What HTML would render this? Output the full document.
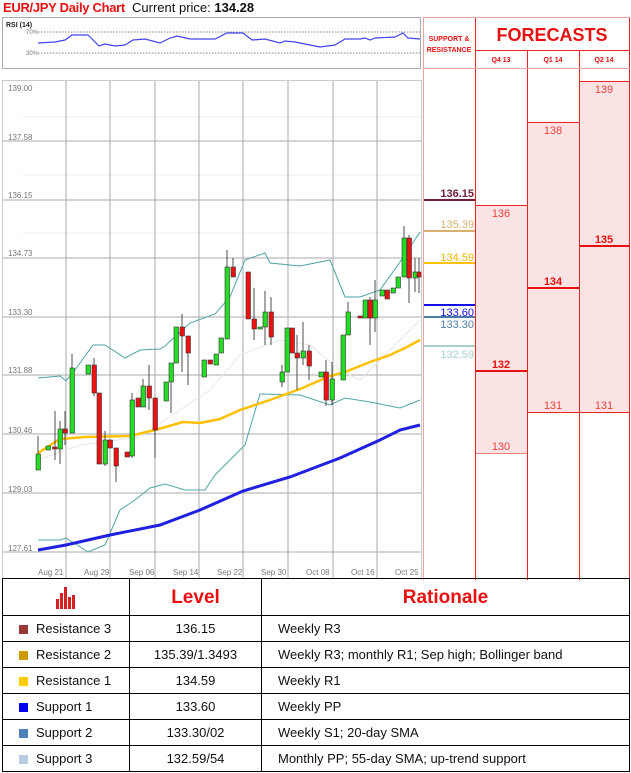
<!DOCTYPE html>
<html><head><meta charset="utf-8"><style>
body{margin:0;width:631px;height:773px;background:#fff;position:relative;overflow:hidden;font-family:"Liberation Sans",sans-serif}
.a{position:absolute}
table{border-collapse:collapse;position:absolute;left:2px;top:578px;width:628px}
td{border:1px solid #000;height:25px;font-size:13px;color:#111;padding:0;line-height:15px}
.c{text-align:center}
.sq{display:inline-block;width:9px;height:9px;margin:0 8px 0 16px;vertical-align:-1px}
</style></head><body>
<div class="a" style="left:3px;top:0;font-size:13px;color:#e81010;font-weight:bold;letter-spacing:-0.3px">EUR/JPY Daily Chart</div>
<div class="a" style="left:132px;top:0;font-size:13px;color:#111">Current price: <b>134.28</b></div>
<svg class="a" style="left:0;top:0" width="631" height="580">
<rect x="2.5" y="17.5" width="418" height="51" fill="#fff" stroke="#aaa"/>
<text x="6" y="27" font-size="7" font-weight="bold" fill="#222" font-family="Liberation Sans">RSI (14)</text>
<text x="26" y="34" font-size="6" fill="#777">70%</text><text x="26" y="55" font-size="6" fill="#777">30%</text>
<line x1="38" y1="32" x2="420" y2="32" stroke="#555" stroke-dasharray="1.5,1.5" stroke-width="0.8"/>
<line x1="38" y1="53" x2="420" y2="53" stroke="#555" stroke-dasharray="1.5,1.5" stroke-width="0.8"/>
<polyline fill="none" stroke="#4444ee" stroke-width="1.2" points="38,43 55,42 65,40 72,35 88,35 99,46 105,44 115,46 125,45 133,40 145,39 160,43 170,38 177,36 190,39 215,39 227,33 243,33 252,40 265,39 280,43 285,41 295,42 305,44 320,47 335,45 345,39 360,39 365,38 370,40 375,38 395,37 403,33 408,38 420,39"/>
<rect x="2.5" y="80.5" width="419" height="498" fill="#fff" stroke="#ccc"/>
<g stroke="#eee" stroke-width="1">
<line x1="22" y1="117" x2="421" y2="117"/><line x1="22" y1="175" x2="421" y2="175"/><line x1="22" y1="233" x2="421" y2="233"/>
</g>
<g stroke="#aaa" stroke-width="1">
<line x1="3" y1="141" x2="421" y2="141"/><line x1="3" y1="200" x2="421" y2="200"/><line x1="3" y1="258" x2="421" y2="258"/><line x1="3" y1="317" x2="421" y2="317"/><line x1="3" y1="375" x2="421" y2="375"/><line x1="3" y1="434" x2="421" y2="434"/><line x1="3" y1="493" x2="421" y2="493"/><line x1="3" y1="552" x2="421" y2="552"/>
<line x1="66" y1="81" x2="66" y2="578"/><line x1="110" y1="81" x2="110" y2="578"/><line x1="155" y1="81" x2="155" y2="578"/><line x1="199" y1="81" x2="199" y2="578"/><line x1="243" y1="81" x2="243" y2="578"/><line x1="288" y1="81" x2="288" y2="578"/><line x1="333" y1="81" x2="333" y2="578"/><line x1="377" y1="81" x2="377" y2="578"/>
</g>
<g font-size="8" fill="#777" font-family="Liberation Sans">
<text x="8" y="91">139.00</text><text x="8" y="140">137.58</text><text x="8" y="198">136.15</text><text x="8" y="256">134.73</text><text x="8" y="315">133.30</text><text x="8" y="373">131.88</text><text x="8" y="433">130.46</text><text x="8" y="492">129.03</text><text x="8" y="551">127.61</text>
<text x="38" y="575">Aug 21</text><text x="84" y="575">Aug 29</text><text x="129" y="575">Sep 06</text><text x="173" y="575">Sep 14</text><text x="217" y="575">Sep 22</text><text x="261" y="575">Sep 30</text><text x="306" y="575">Oct 08</text><text x="351" y="575">Oct 16</text><text x="395" y="575">Oct 25</text>
</g>
<polyline fill="none" stroke="#e6e6e6" stroke-width="1" points="38,460 80,445 140,437 180,410 210,390 240,355 280,340 310,345 340,370 360,380 400,340 420,320"/>
<polyline fill="none" stroke="#4fa3a5" stroke-width="1" points="38,378 60,376 66,381 75,370 93,345 105,345 125,358 140,350 160,349 165,346 190,323 215,314 230,297 245,260 265,253 270,263 300,266 330,260 345,297 360,297 380,290 400,262 420,232"/>
<polyline fill="none" stroke="#4fa3a5" stroke-width="1" points="38,540 60,540 66,538 88,552 105,545 120,510 135,500 150,488 165,484 185,490 205,490 215,475 225,465 245,445 260,394 300,395 330,405 345,398 370,402 400,408 420,400"/>
<polyline fill="none" stroke="#ffc000" stroke-width="2.5" points="38,453 60,439 85,437 130,436 155,430 183,422 200,423 220,419 240,410 270,400 300,389 330,376 345,372 370,362 390,355 405,348 420,340"/>
<polyline fill="none" stroke="#2020e0" stroke-width="3" points="38,550 66,545 110,535 160,525 200,510 243,491 290,477 340,458 380,440 400,430 420,425"/>
<g stroke="#222" stroke-width="0.8">
<line x1="38" y1="436" x2="38" y2="470"/><line x1="55" y1="411" x2="55" y2="460"/><line x1="60" y1="421" x2="60" y2="464"/><line x1="65" y1="411" x2="65" y2="445"/><line x1="72" y1="354" x2="72" y2="433"/><line x1="94" y1="358" x2="94" y2="396"/><line x1="105" y1="431" x2="105" y2="466"/><line x1="116" y1="448" x2="116" y2="482"/><line x1="132" y1="393" x2="132" y2="458"/><line x1="143" y1="379" x2="143" y2="407"/><line x1="149" y1="365" x2="149" y2="410"/><line x1="155" y1="398" x2="155" y2="458"/><line x1="171" y1="363" x2="171" y2="413"/><line x1="182" y1="314" x2="182" y2="372"/><line x1="188" y1="336" x2="188" y2="385"/>
<line x1="227" y1="250" x2="227" y2="339"/><line x1="233" y1="258" x2="233" y2="277"/><line x1="254" y1="288" x2="254" y2="340"/><line x1="265" y1="291" x2="265" y2="345"/><line x1="271" y1="297" x2="271" y2="345"/><line x1="282" y1="365" x2="282" y2="387"/><line x1="297" y1="335" x2="297" y2="390"/><line x1="303" y1="322" x2="303" y2="365"/><line x1="309" y1="345" x2="309" y2="380"/><line x1="326" y1="360" x2="326" y2="406"/><line x1="332" y1="362" x2="332" y2="405"/><line x1="348" y1="302" x2="348" y2="335"/><line x1="370" y1="297" x2="370" y2="345"/><line x1="375" y1="280" x2="375" y2="332"/><line x1="404" y1="226" x2="404" y2="277"/><line x1="409" y1="235" x2="409" y2="303"/><line x1="415" y1="258" x2="415" y2="292"/><line x1="419" y1="258" x2="419" y2="293"/>
</g>
<g stroke="#333" stroke-width="0.6">
<rect x="36" y="454" width="4.5" height="16" fill="#22dd22"/><rect x="46" y="446" width="4.5" height="4" fill="#22dd22"/><rect x="52.5" y="447" width="4.5" height="2" fill="#ee1111"/><rect x="58" y="429" width="4.5" height="20" fill="#22dd22"/><rect x="63" y="429" width="4.5" height="4" fill="#ee1111"/><rect x="70" y="368" width="4.5" height="65" fill="#22dd22"/><rect x="86" y="365" width="4.5" height="9" fill="#22dd22"/><rect x="92" y="365" width="4.5" height="28" fill="#ee1111"/><rect x="97" y="393" width="4.5" height="71" fill="#ee1111"/><rect x="103" y="440" width="4.5" height="24" fill="#22dd22"/><rect x="108" y="440" width="4.5" height="8" fill="#ee1111"/><rect x="114" y="448" width="4.5" height="18" fill="#ee1111"/><rect x="125" y="452" width="4.5" height="5" fill="#ee1111"/><rect x="130" y="400" width="4.5" height="56" fill="#22dd22"/><rect x="136" y="398" width="4.5" height="9" fill="#ee1111"/><rect x="141" y="386" width="4.5" height="21" fill="#22dd22"/><rect x="147" y="386" width="4.5" height="12" fill="#ee1111"/><rect x="153" y="398" width="4.5" height="32" fill="#ee1111"/><rect x="164" y="382" width="4.5" height="19" fill="#22dd22"/><rect x="169" y="363" width="4.5" height="19" fill="#22dd22"/><rect x="174" y="327" width="4.5" height="36" fill="#22dd22"/><rect x="180" y="327" width="4.5" height="9" fill="#ee1111"/><rect x="186" y="336" width="4.5" height="17" fill="#ee1111"/><rect x="202" y="360" width="4.5" height="17" fill="#22dd22"/><rect x="208" y="360" width="4.5" height="4" fill="#ee1111"/><rect x="214" y="354" width="4.5" height="11" fill="#22dd22"/><rect x="219" y="338" width="4.5" height="15" fill="#22dd22"/><rect x="225" y="267" width="4.5" height="72" fill="#22dd22"/><rect x="231" y="267" width="4.5" height="10" fill="#ee1111"/><rect x="246" y="272" width="4.5" height="47" fill="#ee1111"/><rect x="252" y="319" width="4.5" height="10" fill="#ee1111"/><rect x="258" y="327" width="4.5" height="2" fill="#22dd22"/><rect x="263" y="312" width="4.5" height="15" fill="#22dd22"/><rect x="269" y="312" width="4.5" height="25" fill="#ee1111"/><rect x="280" y="372" width="4.5" height="10" fill="#22dd22"/><rect x="285" y="328" width="4.5" height="44" fill="#22dd22"/><rect x="290" y="328" width="4.5" height="25" fill="#ee1111"/><rect x="295" y="353" width="4.5" height="5" fill="#ee1111"/><rect x="301" y="351" width="4.5" height="7" fill="#22dd22"/><rect x="307" y="351" width="4.5" height="15" fill="#ee1111"/><rect x="319" y="372" width="4.5" height="5" fill="#22dd22"/><rect x="324" y="372" width="4.5" height="28" fill="#ee1111"/><rect x="330" y="379" width="4.5" height="21" fill="#22dd22"/><rect x="341" y="335" width="4.5" height="45" fill="#22dd22"/><rect x="346" y="312" width="4.5" height="23" fill="#22dd22"/><rect x="358" y="316" width="4.5" height="2" fill="#ee1111"/><rect x="363" y="300" width="4.5" height="18" fill="#22dd22"/><rect x="368" y="300" width="4.5" height="18" fill="#ee1111"/><rect x="373" y="300" width="4.5" height="18" fill="#22dd22"/><rect x="380" y="290" width="4.5" height="6" fill="#22dd22"/><rect x="385" y="290" width="4.5" height="9" fill="#ee1111"/><rect x="391" y="288" width="4.5" height="5" fill="#22dd22"/><rect x="396" y="277" width="4.5" height="11" fill="#22dd22"/><rect x="402" y="238" width="4.5" height="39" fill="#22dd22"/><rect x="407" y="238" width="4.5" height="40" fill="#ee1111"/><rect x="413" y="272" width="4.5" height="6" fill="#22dd22"/><rect x="417" y="272" width="4" height="5" fill="#ee1111"/>
</g>
<rect x="476" y="205" width="51" height="248" fill="#fde4e4"/>
<rect x="528" y="122" width="51" height="290" fill="#fde4e4"/>
<rect x="580" y="81" width="49" height="331" fill="#fde4e4"/>
<g stroke="#ee2222" stroke-width="1">
<line x1="423.5" y1="17" x2="423.5" y2="580" stroke="#f2a0a0"/>
<line x1="475.5" y1="17" x2="475.5" y2="580"/>
<line x1="527.5" y1="50" x2="527.5" y2="580"/>
<line x1="579.5" y1="50" x2="579.5" y2="580"/>
<line x1="629.5" y1="17" x2="629.5" y2="580"/>
<line x1="423" y1="17.5" x2="630" y2="17.5" stroke="#f2a0a0"/>
<line x1="475" y1="50.5" x2="630" y2="50.5"/>
<line x1="423" y1="68.5" x2="630" y2="68.5" stroke="#f2a0a0"/>
<line x1="476" y1="205.5" x2="527" y2="205.5"/><line x1="476" y1="453.5" x2="527" y2="453.5" stroke="#f08080"/>
<line x1="528" y1="122.5" x2="579" y2="122.5"/><line x1="528" y1="412.5" x2="630" y2="412.5"/>
<line x1="580" y1="81.5" x2="630" y2="81.5"/>
</g>
<g stroke-width="2">
<line x1="476" y1="371" x2="527" y2="371" stroke="#e81010"/>
<line x1="528" y1="288" x2="579" y2="288" stroke="#e81010"/>
<line x1="580" y1="246" x2="630" y2="246" stroke="#e81010"/>
<line x1="424" y1="200" x2="475" y2="200" stroke="#6b1f3f"/>
<line x1="424" y1="231" x2="475" y2="231" stroke="#d8b070"/>
<line x1="424" y1="263" x2="475" y2="263" stroke="#ffc000"/>
<line x1="424" y1="305" x2="475" y2="305" stroke="#1010ee"/>
<line x1="424" y1="317" x2="475" y2="317" stroke="#4a7ea8"/>
<line x1="424" y1="346" x2="475" y2="346" stroke="#a8d0d0"/>
</g>
<g font-family="Liberation Sans" font-size="11" text-anchor="end">
<text x="474" y="197" fill="#6b1f3f" font-weight="bold">136.15</text>
<text x="474" y="228" fill="#d8b070">135.39</text>
<text x="474" y="261" fill="#f0b800">134.59</text>
<text x="474" y="316" fill="#1010ee">133.60</text>
<text x="474" y="328" fill="#4a7ea8">133.30</text>
<text x="474" y="358" fill="#a8d0d0">132.59</text>
</g>
<g font-family="Liberation Sans" font-size="11" text-anchor="middle" fill="#e84040">
<text x="501" y="217">136</text><text x="501" y="368" font-weight="bold" fill="#e81010">132</text><text x="501" y="450">130</text>
<text x="553" y="134">138</text><text x="553" y="285" font-weight="bold" fill="#e81010">134</text><text x="553" y="409">131</text>
<text x="604" y="93">139</text><text x="604" y="243" font-weight="bold" fill="#e81010">135</text><text x="604" y="409">131</text>
</g>
<text x="449" y="41" font-size="7" font-weight="bold" fill="#e81010" text-anchor="middle" font-family="Liberation Sans">SUPPORT &amp;</text>
<text x="449" y="52" font-size="7" font-weight="bold" fill="#e81010" text-anchor="middle" font-family="Liberation Sans">RESISTANCE</text>
<text x="552" y="41" font-size="18" font-weight="bold" fill="#e81010" text-anchor="middle" font-family="Liberation Sans">FORECASTS</text>
<g font-size="7" font-weight="bold" fill="#e81010" text-anchor="middle" font-family="Liberation Sans">
<text x="501" y="62">Q4 13</text><text x="553" y="62">Q1 14</text><text x="604" y="62">Q2 14</text></g>
</svg>
<table>
<tr><td class="c" style="width:126px;height:36px"><svg width="22" height="24" viewBox="0 0 22 24" style="vertical-align:middle"><g fill="#d42020"><rect x="1" y="14" width="3" height="10"/><rect x="5" y="8" width="3" height="16"/><rect x="9" y="2" width="3" height="22"/><rect x="13" y="12" width="3" height="12"/><rect x="17" y="10" width="3" height="14"/></g></svg></td><td class="c" style="width:131px;font-size:19px;font-weight:bold;color:#e81010">Level</td><td class="c" style="font-size:19px;font-weight:bold;color:#e81010">Rationale</td></tr>
<tr><td><span class="sq" style="background:#9b3838"></span>Resistance 3</td><td class="c">136.15</td><td style="padding-left:16px">Weekly R3</td></tr>
<tr><td><span class="sq" style="background:#cc9900"></span>Resistance 2</td><td class="c">135.39/1.3493</td><td style="padding-left:16px">Weekly R3; monthly R1; Sep high; Bollinger band</td></tr>
<tr><td><span class="sq" style="background:#ffcc00"></span>Resistance 1</td><td class="c">134.59</td><td style="padding-left:16px">Weekly R1</td></tr>
<tr><td><span class="sq" style="background:#0000ee"></span>Support 1</td><td class="c">133.60</td><td style="padding-left:16px">Weekly PP</td></tr>
<tr><td><span class="sq" style="background:#4f81bd"></span>Support 2</td><td class="c">133.30/02</td><td style="padding-left:16px">Weekly S1; 20-day SMA</td></tr>
<tr><td><span class="sq" style="background:#b8cce4"></span>Support 3</td><td class="c">132.59/54</td><td style="padding-left:16px">Monthly PP; 55-day SMA; up-trend support</td></tr>
</table>
</body></html>
